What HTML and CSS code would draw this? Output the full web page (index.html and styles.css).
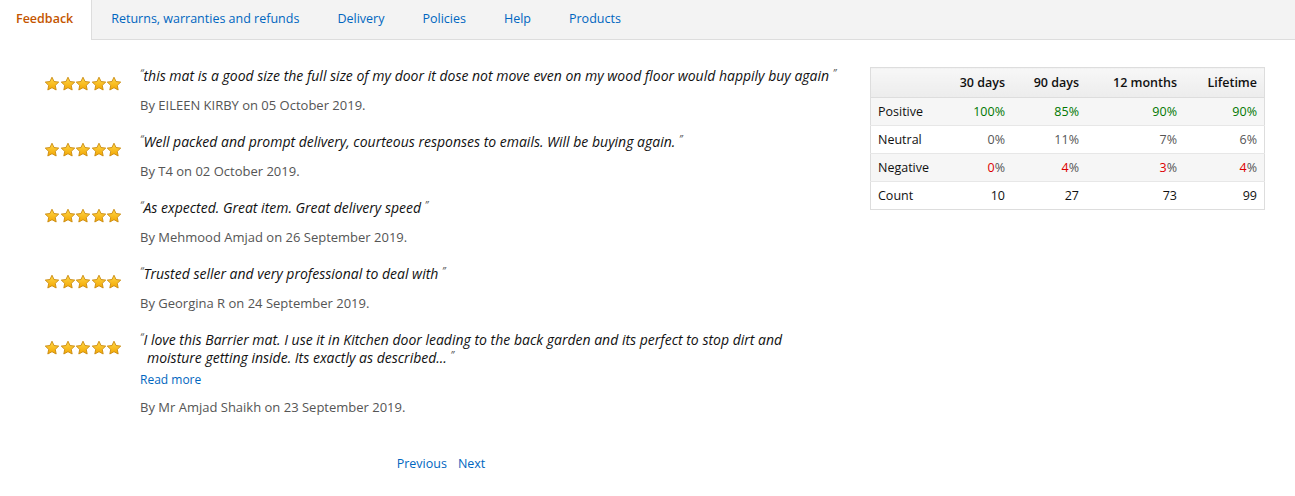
FILE: index.html
```html
<!DOCTYPE html>
<html lang="en">
  <head>
    <meta charset="UTF-8" />
    <meta name="viewport" content="width=device-width, initial-scale=1.0" />
    <title>Seller feedback</title>
    <link rel="stylesheet" href="styles.css">
  </head>
  <body>
    <svg width="0" height="0" class="defs">
      <defs>
        <linearGradient id="star-fill" x1="0" y1="0" x2="0" y2="1">
          <stop offset="0" stop-color="#ffd84a" />
          <stop offset="1" stop-color="#f3a600" />
        </linearGradient>
        <symbol id="star" viewBox="0 0 16 16">
          <path
            d="M8 1.2l2.05 4.3 4.7.6-3.45 3.25.88 4.65L8 11.7l-4.18 2.3.88-4.65L1.25 6.1l4.7-.6z"
            fill="url(#star-fill)"
            stroke="#c98a10"
            stroke-width="0.9"
            stroke-linejoin="round"
          />
        </symbol>
      </defs>
    </svg>

    <div class="tabs">
      <a class="tab active">Feedback</a>
      <a class="tab">Returns, warranties and refunds</a>
      <a class="tab">Delivery</a>
      <a class="tab">Policies</a>
      <a class="tab">Help</a>
      <a class="tab">Products</a>
    </div>

    <div class="content">
      <div class="feedback-list">
        <div class="review">
          <div class="stars"></div>
          <div class="review-body">
            <p class="review-text"><span class="q">“</span>this mat is a good size the full size of my door it dose not move even on my wood floor would happily buy again <span class="q">”</span></p>
            <p class="review-author">By EILEEN KIRBY on 05 October 2019.</p>
          </div>
        </div>
        <div class="review">
          <div class="stars"></div>
          <div class="review-body">
            <p class="review-text"><span class="q">“</span>Well packed and prompt delivery, courteous responses to emails. Will be buying again. <span class="q">”</span></p>
            <p class="review-author">By T4 on 02 October 2019.</p>
          </div>
        </div>
        <div class="review">
          <div class="stars"></div>
          <div class="review-body">
            <p class="review-text"><span class="q">“</span>As expected. Great item. Great delivery speed <span class="q">”</span></p>
            <p class="review-author">By Mehmood Amjad on 26 September 2019.</p>
          </div>
        </div>
        <div class="review">
          <div class="stars"></div>
          <div class="review-body">
            <p class="review-text"><span class="q">“</span>Trusted seller and very professional to deal with <span class="q">”</span></p>
            <p class="review-author">By Georgina R on 24 September 2019.</p>
          </div>
        </div>
        <div class="review">
          <div class="stars"></div>
          <div class="review-body">
            <p class="review-text long"><span class="q">“</span>I love this Barrier mat. I use it in Kitchen door leading to the back garden and its perfect to stop dirt and moisture getting inside. Its exactly as described... <span class="q">”</span></p>
            <a class="read-more">Read more</a>
            <p class="review-author">By Mr Amjad Shaikh on 23 September 2019.</p>
          </div>
        </div>

        <div class="pagination">
          <a>Previous</a>
          <a>Next</a>
        </div>
      </div>

      <table class="summary">
        <thead>
          <tr>
            <th class="c-label"></th>
            <th class="c-30">30 days</th>
            <th class="c-90">90 days</th>
            <th class="c-12">12 months</th>
            <th class="c-life">Lifetime</th>
          </tr>
        </thead>
        <tbody>
          <tr>
            <td>Positive</td>
            <td class="good">100%</td>
            <td class="good">85%</td>
            <td class="good">90%</td>
            <td class="good">90%</td>
          </tr>
          <tr>
            <td>Neutral</td>
            <td class="neutral">0%</td>
            <td class="neutral">11%</td>
            <td class="neutral">7%</td>
            <td class="neutral">6%</td>
          </tr>
          <tr>
            <td>Negative</td>
            <td class="neutral"><span class="bad">0</span>%</td>
            <td class="neutral"><span class="bad">4</span>%</td>
            <td class="neutral"><span class="bad">3</span>%</td>
            <td class="neutral"><span class="bad">4</span>%</td>
          </tr>
          <tr>
            <td>Count</td>
            <td>10</td>
            <td>27</td>
            <td>73</td>
            <td>99</td>
          </tr>
        </tbody>
      </table>
    </div>

    <script>
      // five stars for every review
      document.querySelectorAll(".stars").forEach((el) => {
        for (let i = 0; i < 5; i++) {
          el.innerHTML += '<svg class="star"><use href="#star" /></svg>';
        }
      });
    </script>
  </body>
</html>
```

FILE: styles.css
```css
body {
  margin: 0;
  font-family: "Open Sans", "Noto Sans", sans-serif;
  font-size: 13px;
  color: #111;
  background: white;
}

.defs {
  position: absolute;
}

.tabs {
  display: flex;
  height: 39px;
  background: #f3f3f3;
  border-bottom: 1px solid #dddddd;
}

.tab {
  display: flex;
  align-items: center;
  padding: 0 19px 3px 19px;
  color: #0066c0;
  font-size: 12.5px;
  cursor: pointer;
}

.tab.active {
  background: white;
  color: #c45500;
  font-weight: 600;
  padding: 0 18px 3px 16px;
  border-right: 1px solid #dddddd;
  margin-bottom: -1px;
}

.content {
  display: flex;
  padding: 27px 30px 0 44px;
  gap: 28px;
}

.feedback-list {
  width: 800px;
}

.review {
  display: flex;
  gap: 18px;
  margin-bottom: 18px;
}

.stars {
  display: flex;
  width: 78px;
  padding-top: 9px;
  flex-shrink: 0;
}

.star {
  width: 16px;
  height: 16px;
  margin-right: -0.4px;
}

.review-body {
  flex: 1;
}

.review-text {
  margin: 0;
  font-style: italic;
  font-size: 14px;
  line-height: 18px;
  color: #111;
}

.review-text.long {
  padding-left: 7px;
  text-indent: -7px;
  padding-right: 30px;
}

.q {
  font-size: 10px;
  line-height: 0;
  color: #555;
  vertical-align: 4px;
}

.review-author {
  margin: 11px 0 0;
  color: #555;
  font-size: 13px;
  line-height: 19px;
}

.read-more {
  display: block;
  margin-top: 5px;
  font-size: 12px;
  line-height: 16px;
  color: #0066c0;
  cursor: pointer;
}

.read-more + .review-author {
  margin-top: 10px;
}

.pagination {
  display: flex;
  justify-content: center;
  gap: 11px;
  margin-top: 38px;
  padding-right: 4px;
  line-height: 18px;
}

.pagination a {
  color: #0066c0;
  font-size: 12.5px;
  cursor: pointer;
}

.summary {
  width: 393px;
  table-layout: fixed;
  border-collapse: collapse;
  border: 1px solid #dddddd;
  font-size: 12.5px;
  align-self: flex-start;
}

.summary th {
  height: 29px;
  text-align: right;
  font-weight: 600;
  padding: 0 7px;
  background: linear-gradient(#f7f7f7, #ececec);
  border-bottom: 1px solid #dddddd;
}

.summary .c-label {
  width: 66px;
}

.summary .c-30 {
  width: 47px;
}

.summary .c-90 {
  width: 60px;
}

.summary .c-12 {
  width: 84px;
}

.summary .c-life {
  width: 66px;
}

.summary td {
  height: 27px;
  text-align: right;
  padding: 0 7px;
  color: #111;
  border-top: 1px solid #e7e7e7;
}

.summary td:first-child {
  text-align: left;
}

.summary tbody tr:nth-child(odd) {
  background: #f6f6f6;
}

.summary .good {
  color: #007600;
}

.summary .neutral {
  color: #555;
}

.summary .bad {
  color: #dd0000;
}
```
